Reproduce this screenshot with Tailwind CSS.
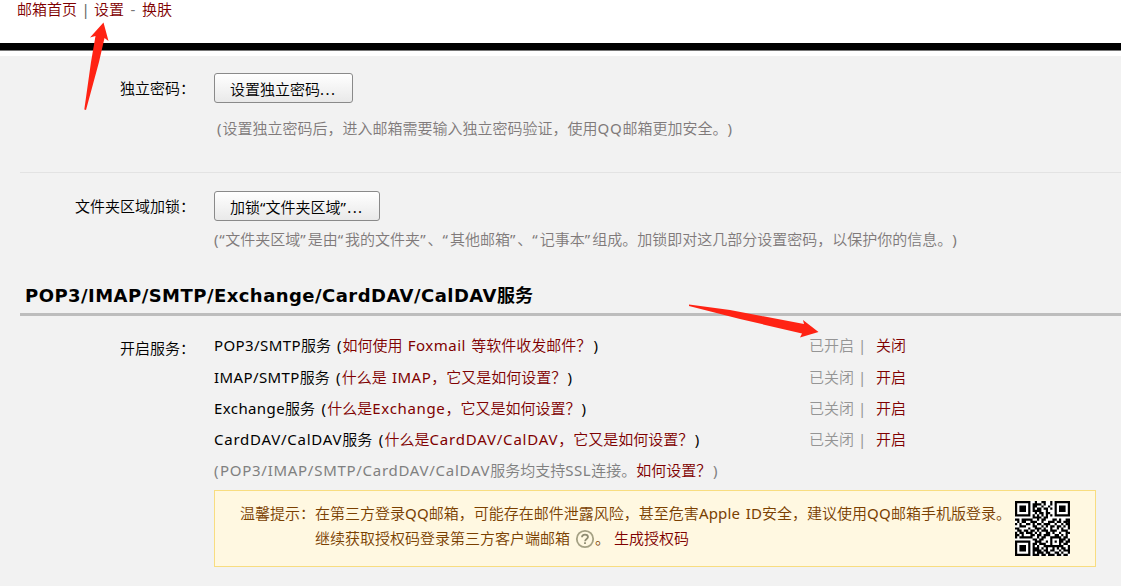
<!DOCTYPE html>
<html lang="zh-CN">
<head>
<meta charset="utf-8">
<title>邮箱设置</title>
<script src="https://cdn.jsdelivr.net/npm/@tailwindcss/browser@4"></script>
</head>
<body class="relative h-[586px] w-[1121px] overflow-hidden bg-[#f2f2f2] font-['Noto_Sans','Noto_Sans_CJK_SC',sans-serif] text-[15px] font-[350] leading-[20px] text-black [text-spacing-trim:space-all] [word-spacing:1.3px]">
<header class="h-[56px] bg-white">
  <nav class="flex h-[43px] items-start pl-[17px] text-[#7f0000]"><a class="-mt-px">邮箱首页</a><span class="-mt-px w-[17px] text-center font-normal text-[#666]">|</span><a class="-mt-px">设置</a><span class="-mt-px w-[18px] text-center font-normal text-[#777]">-</span><a class="-mt-px">换肤</a></nav>
  <div class="h-2 border-b border-[#777] bg-black"></div>
</header>
<main class="pl-5">
  <section class="flex h-[117px] border-b border-[#e3e3e3] pt-[17px]">
    <div class="w-[172px] pt-[5px] text-right"><span class="-mr-[3px]">独立密码：</span></div>
    <div class="pl-[22px]">
      <button class="block h-[30px] w-[139px] rounded-[3px] border border-[#8a8a8a] bg-linear-to-b from-white to-[#e9e9e9] pl-[15px] text-left leading-[30px]">设置独立密码<span class="font-normal tracking-[1.5px]">...</span></button>
      <p class="mt-[15px] pl-[3px] text-[#807a7a]"><span class="font-normal tracking-[1px]">(</span>设置独立密码后，进入邮箱需要输入独立密码验证，使用<span class="font-normal tracking-[0.7px]">QQ</span>邮箱更加安全。<span class="font-normal">)</span></p>
    </div>
  </section>
  <section class="flex h-[107px] pt-[18px]">
    <div class="w-[172px] pt-[5px] text-right"><span class="-mr-[3px]">文件夹区域加锁：</span></div>
    <div class="pl-[22px]">
      <button class="block h-[30px] w-[166px] rounded-[3px] border border-[#8a8a8a] bg-linear-to-b from-white to-[#e9e9e9] pl-[15px] text-left leading-[30px]">加锁<span class="font-normal">“</span>文件夹区域<span class="font-normal tracking-[1.4px]">”...</span></button>
      <p class="mt-[8px] whitespace-nowrap text-[#807a7a]"><span class="font-normal tracking-[0.7px]">(“</span>文件夹区域<span class="font-normal tracking-[2px]">”</span>是由<span class="font-normal tracking-[2px]">“</span>我的文件夹<span class="font-normal tracking-[2px]">”</span>、<span class="font-normal tracking-[2px]">“</span>其他邮箱<span class="font-normal tracking-[2px]">”</span>、<span class="font-normal tracking-[2px]">“</span>记事本<span class="font-normal tracking-[2px]">”</span>组成。加锁即对这几部分设置密码，以保护你的信息。<span class="font-normal">)</span></p>
    </div>
  </section>
  <h2 class="h-[36px] border-b-[3px] border-[#bdbdbd] pl-[5px] pt-[6px] font-['DejaVu_Sans','Noto_Sans_CJK_SC',sans-serif] text-[18px] font-bold leading-[20px]"><span class="tracking-[0.46px]">POP3/IMAP/SMTP/Exchange/CardDAV/CalDAV</span>服务</h2>
  <section class="flex pt-[19px]">
    <div class="w-[172px] pt-[3px] text-right"><span class="-mr-[3px]">开启服务：</span></div>
    <div class="pl-[22px]">
      <div class="flex h-8"><p class="w-[595px]"><span class="font-normal tracking-[0.4px]">POP3/SMTP</span>服务<span class="font-normal tracking-[1px]"> (</span><a class="text-[#7f0000]">如何使用 <span class="font-normal tracking-[0.5px]">Foxmail</span> 等软件收发邮件？</a><span class="font-normal [word-spacing:-1.5px]"> )</span></p><span class="w-[49px] text-[#959595]">已开启</span><span class="w-[18px] font-normal text-[#959595]">|</span><a class="text-[#7f0000]">关闭</a></div>
      <div class="flex h-[31px]"><p class="w-[595px]"><span class="font-normal tracking-[0.4px]">IMAP/SMTP</span>服务<span class="font-normal tracking-[1.1px]"> (</span><a class="text-[#7f0000]">什么是 <span class="font-normal tracking-[0.5px]">IMAP</span>，它又是如何设置？</a><span class="font-normal [word-spacing:-2.8px]"> )</span></p><span class="w-[49px] text-[#959595]">已关闭</span><span class="w-[18px] font-normal text-[#959595]">|</span><a class="text-[#7f0000]">开启</a></div>
      <div class="flex h-[31px]"><p class="w-[595px]"><span class="font-normal tracking-[0.4px]">Exchange</span>服务<span class="font-normal tracking-[1.3px]"> (</span><a class="text-[#7f0000]">什么是<span class="font-normal tracking-[0.65px]">Exchange</span>，它又是如何设置？</a><span class="font-normal [word-spacing:-2.8px]"> )</span></p><span class="w-[49px] text-[#959595]">已关闭</span><span class="w-[18px] font-normal text-[#959595]">|</span><a class="text-[#7f0000]">开启</a></div>
      <div class="flex h-[31px]"><p class="w-[595px]"><span class="font-normal tracking-[0.75px]">CardDAV/CalDAV</span>服务<span class="font-normal tracking-[1.3px]"> (</span><a class="text-[#7f0000]">什么是<span class="font-normal tracking-[0.8px]">CardDAV/CalDAV</span>，它又是如何设置？</a><span class="font-normal [word-spacing:-2.5px]"> )</span></p><span class="w-[49px] text-[#959595]">已关闭</span><span class="w-[18px] font-normal text-[#959595]">|</span><a class="text-[#7f0000]">开启</a></div>
      <p class="h-[30px] text-[#808080]"><span class="font-normal tracking-[1.5px]">(</span><span class="font-normal tracking-[0.72px]">POP3/IMAP/SMTP/CardDAV/CalDAV</span>服务均支持<span class="font-normal tracking-[0.5px]">SSL</span>连接。<a class="text-[#7f0000]">如何设置？</a><span class="font-normal [word-spacing:-2px]"> )</span></p>
      <div class="flex h-[77px] w-[882px] border border-[#f8dd80] bg-[#fff8e1] pl-[25px] pt-[10px] leading-[25px] text-[#7a4000]">
        <div class="w-[75px]">温馨提示：</div>
        <div class="w-[700px] whitespace-nowrap">
          <p>在第三方登录<span class="font-normal tracking-[0.2px]">QQ</span>邮箱，可能存在邮件泄露风险，甚至危害<span class="font-normal tracking-[0.2px]">Apple ID</span>安全，建议使用<span class="font-normal tracking-[0.2px]">QQ</span>邮箱手机版登录。</p>
          <p class="flex items-center">继续获取授权码登录第三方客户端邮箱<svg class="ml-[5px] size-5" viewBox="0 0 20 20" fill="none"><circle cx="10" cy="10" r="8.2" stroke="#a5a184" stroke-width="1.8"/><path d="M7 8.2C7 6.4 8.2 5.6 10 5.6s3 1 3 2.5c0 1.9-2.9 2-2.9 4.1M10 13.3v1.8" stroke="#8f8c72" stroke-width="1.8"/></svg>。<a class="ml-1 text-[#7f0000]">生成授权码</a></p>
        </div>
        <svg id="qr" class="size-[55px]" viewBox="0 0 25 25"><rect width="25" height="25" fill="#fff"/><path fill="#000"/></svg>
      </div>
    </div>
  </section>
</main>
<svg class="pointer-events-none absolute left-0 top-0" width="1121" height="586" fill="#ff2314"><path d="M103.5 22.5 108.5 41 104.5 38 99 62 86 110 84.3 109.5 91 62 95.5 36 90 37.5Z"/><path d="M689 304.5 730 310 804 324 803 320 818.5 332 800 337.5 802 333.5 740 319 689 306Z"/></svg>
<script>
const rows=[
"1111111001001100101111111",
"1000001011110100101000001",
"1011101011001001001011101",
"1011101010110110101011101",
"1011101011110010001011101",
"1000001001011011001000001",
"1111111010101010101111111",
"0000000011110110000000000",
"1101111100101100011010011",
"0101100111001001110110111",
"1010011010110111001001011",
"0011100011001010110110101",
"1100001001110100100101001",
"0110110110101110111001110",
"1011011101010011010010011",
"1101000110110111001101010",
"1011111100101100111110110",
"0000000011011000100011101",
"1111111001110010101011011",
"1000001011011100100010110",
"1011101010100111111111001",
"1011101011101010010101101",
"1011101011110110110010111",
"1000001010111011001101001",
"1111111011101101110110110"];
let d="";
rows.forEach((r,y)=>[...r].forEach((c,x)=>{if(c==="1")d+=`M${x} ${y}h1v1h-1z`}));
document.querySelector("#qr path").setAttribute("d",d);
</script>
</body>
</html>
